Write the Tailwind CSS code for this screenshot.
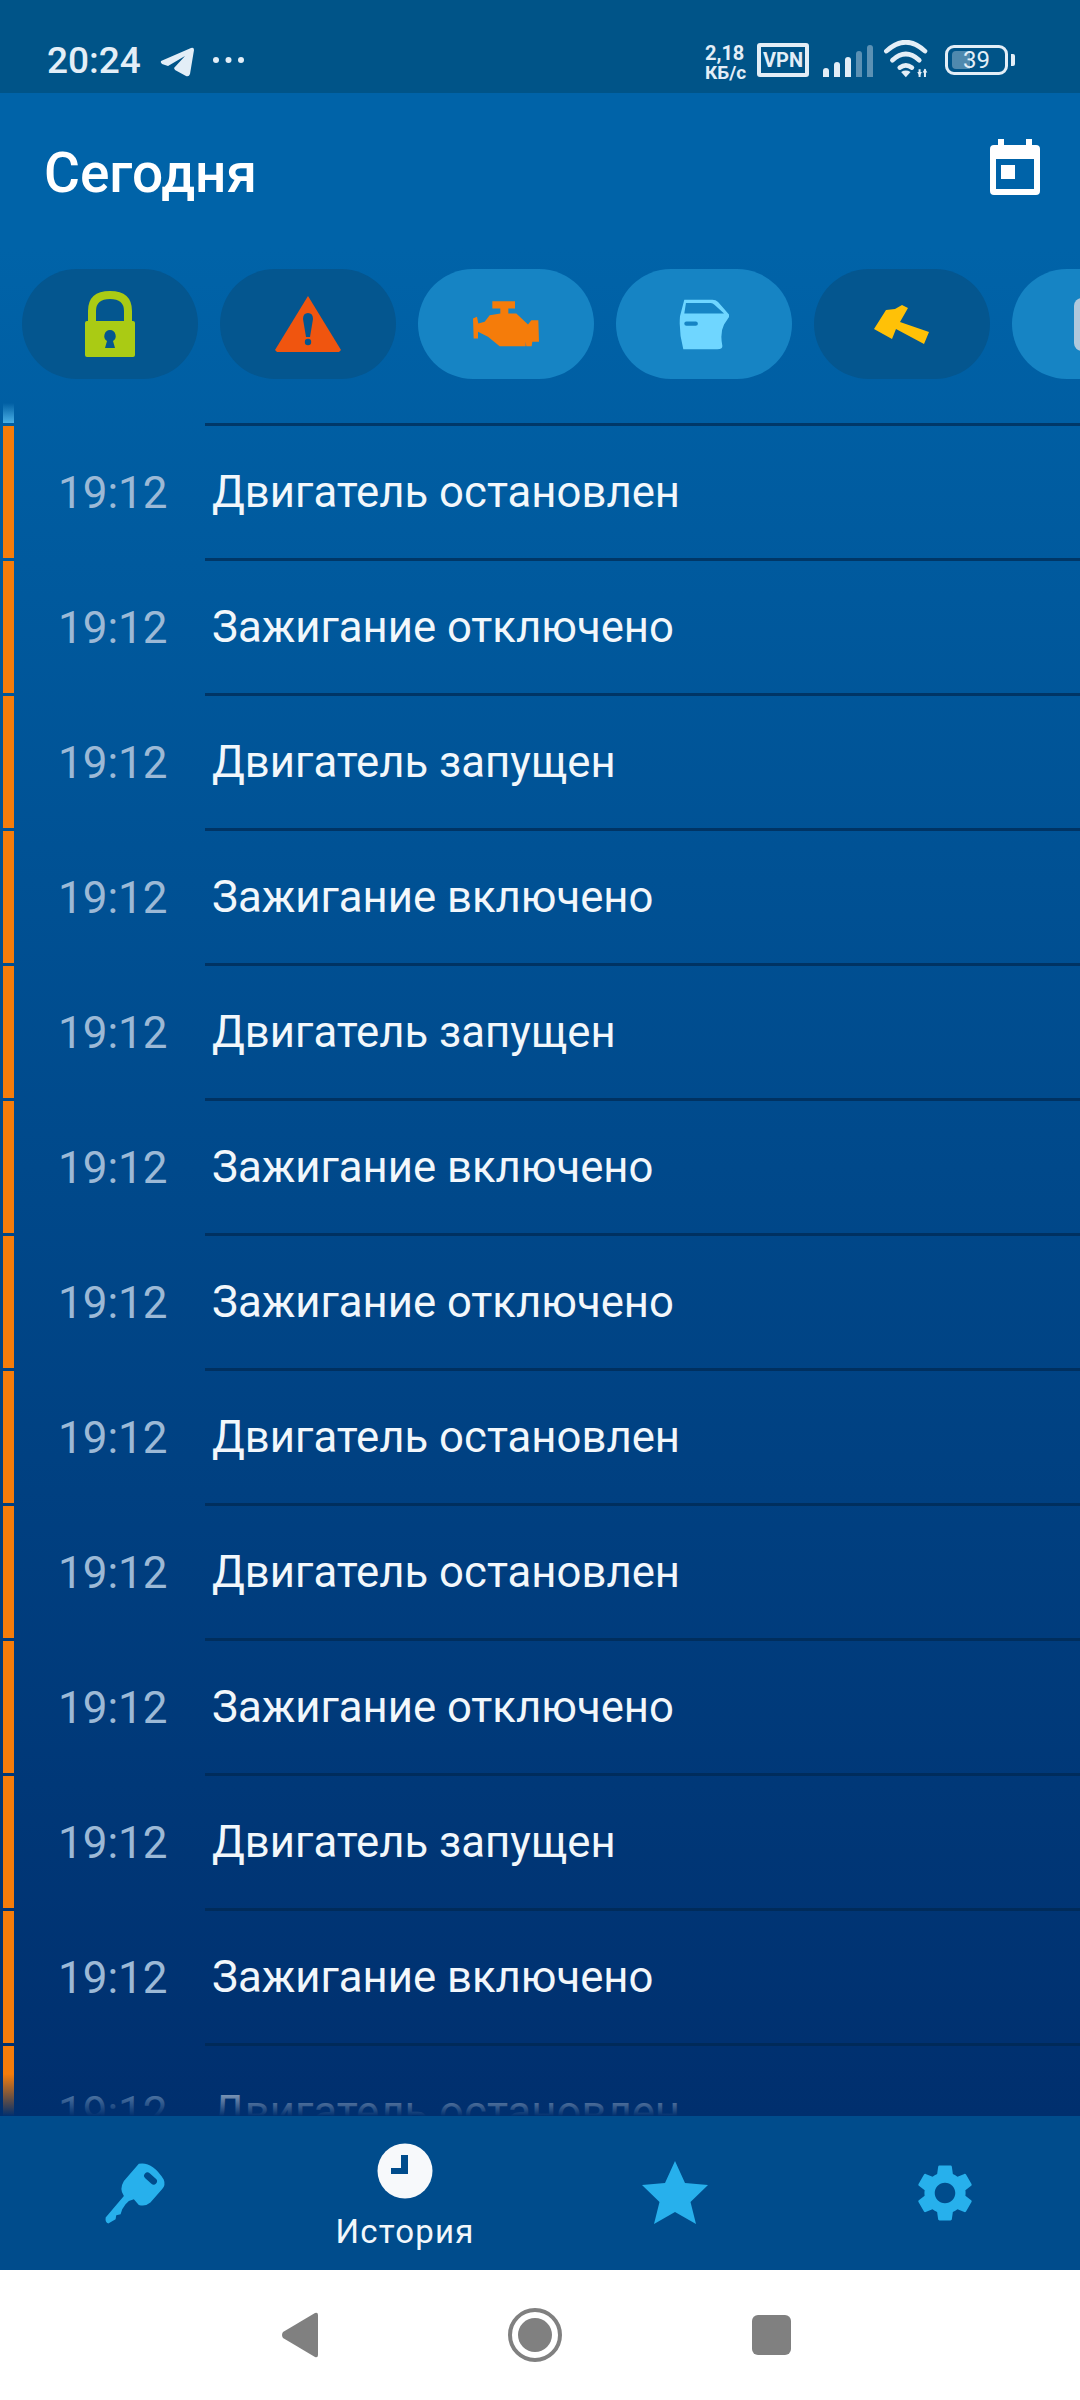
<!DOCTYPE html>
<html lang="ru">
<head>
  <meta charset="UTF-8" />
  <title>История</title>
  <script src="https://cdn.jsdelivr.net/npm/@tailwindcss/browser@4"></script>
</head>
<body class="m-0 bg-white font-['Roboto',sans-serif]">
<div class="w-[1080px] h-[2400px] flex flex-col overflow-hidden">

  <!-- Status bar -->
  <div class="h-[93px] shrink-0 bg-[#005488] text-[#e3eef7] relative">
    <div class="absolute left-[47px] top-[39px] text-[37px] leading-[43px] font-medium">20:24</div>
    <svg class="absolute left-[160px] top-[47px]" width="34" height="30" viewBox="0 0 34 30"><path d="M1 14 31 1Q34 0 34 3L30 27Q29 30 26 29L15 23 14 21 25 9 8 19 2 17Q0 15 1 14Z" fill="#e3eef7"/></svg>
    <svg class="absolute left-[212px] top-[56px]" width="33" height="8" viewBox="0 0 33 8"><circle cx="4" cy="4" r="3" fill="#e3eef7"/><circle cx="16.500" cy="4" r="3" fill="#e3eef7"/><circle cx="29" cy="4" r="3" fill="#e3eef7"/></svg>
    <div class="absolute left-[705px] top-[44px] text-[20px] leading-[19px] font-bold"><div>2,18</div><div class="text-[19px]">КБ/с</div></div>
    <div class="absolute left-[757px] top-[43px] w-[52px] h-[34px] border-[4px] border-[#e3eef7] rounded-[3px] flex items-center justify-center text-[20px] font-bold leading-none">VPN</div>
    <div class="absolute left-[823px] top-[45px] h-[32px] flex items-end gap-[5px]">
      <div class="w-[6px] h-[9px] rounded-t-[3px] bg-[#e3eef7]"></div>
      <div class="w-[6px] h-[15px] rounded-t-[3px] bg-[#e3eef7]"></div>
      <div class="w-[6px] h-[20px] rounded-t-[3px] bg-[#e3eef7]"></div>
      <div class="w-[6px] h-[26px] rounded-t-[3px] bg-[#e3eef7]/40"></div>
      <div class="w-[6px] h-[32px] rounded-t-[3px] bg-[#e3eef7]/40"></div>
    </div>
    <svg class="absolute left-[883px] top-[40px]" width="47" height="38" viewBox="40 15 140 113" fill="none" stroke="#e3eef7" stroke-width="14" stroke-linecap="round"><path d="M50 48Q108-5 165 48"/><path d="M68 75Q108 38 148 75"/><path d="M90 97Q108 84 126 97"/><path d="M108 126 94 110Q108 102 122 110Z" fill="#e3eef7" stroke="none"/><path d="M149 102V125M165 102V125" stroke-width="6" stroke-linecap="butt"/><path d="M142 110H156L149 122ZM158 112H172L165 100Z" fill="#e3eef7" stroke="none"/></svg>
    <div class="absolute left-[945px] top-[45px] w-[63px] h-[30px] border-[3px] border-[#e3eef7] rounded-[9px] overflow-hidden">
      <div class="absolute left-[4px] top-[3px] bottom-[3px] w-[18px] rounded-l-[4px] bg-[#e3eef7]/35"></div>
      <div class="absolute inset-0 flex items-center justify-center text-[24px] leading-none">39</div>
    </div>
    <div class="absolute left-[1011px] top-[54px] w-[4px] h-[12px] rounded-r-[2px] bg-[#e3eef7]"></div>
  </div>

  <!-- Header -->
  <div class="h-[155px] shrink-0 bg-[#0063a8] flex items-center justify-between pl-[44px] pr-[40px] text-white">
    <div class="text-[55px] font-medium leading-none mt-[5px]">Сегодня</div>
    <svg class="mb-[7px]" width="50" height="56" viewBox="0 0 50 56"><path fill-rule="evenodd" fill="#fff" d="M8 0h6v6H36V0h6v6h4q4 0 4 4v42q0 4-4 4H4q-4 0-4-4V10q0-4 4-4h4ZM6 20V50H44V20ZM11 26H25V40H11Z"/><path fill="#fff" d="M11 26H25V40H11Z"/></svg>
  </div>

  <!-- Main area -->
  <div class="flex-1 min-h-0 relative overflow-hidden flex flex-col bg-linear-to-b from-[#0063a8] to-[#002f6e]">

    <!-- Filter chips -->
    <div class="h-[155px] shrink-0 pt-[21px] pl-[22px] flex gap-[22px] overflow-hidden">
      <div class="w-[176px] h-[110px] shrink-0 rounded-[55px] bg-[#04568f] flex items-center justify-center">
        <svg width="50" height="66" viewBox="0 0 50 66"><path d="M7 34V20Q7 4 25 4T43 20V34" fill="none" stroke="#aacb14" stroke-width="8"/><rect y="30" width="50" height="36" rx="2" fill="#aacb14"/><path d="M25 39a6 6 0 0 1 3 11l2 7H20l2-7a6 6 0 0 1 3-11Z" fill="#04568f"/></svg>
      </div>
      <div class="w-[176px] h-[110px] shrink-0 rounded-[55px] bg-[#04568f] flex items-center justify-center">
        <svg width="66" height="56" viewBox="0 0 66 56"><path d="M33 0 66 54 64 56H2L0 54Z" fill="#f0550f"/><path d="M33 17q5 0 5 6l-3 18h-4l-3-18q0-6 5-6Z" fill="#04568f"/><circle cx="33" cy="46" r="3.200" fill="#04568f"/></svg>
      </div>
      <div class="w-[176px] h-[110px] shrink-0 rounded-[55px] bg-[#1684c4] flex items-center justify-center">
        <svg width="66" height="46" viewBox="40 33 198 137"><path d="M98 33H166V55H146V70H170L205 103 215 90H236L238 155H218L216 168H200L198 155V168H120L85 140 55 125V145H42L40 85 52 80 56 100 75 95 90 75 122 70V55H98Z" fill="#f57c0a"/></svg>
      </div>
      <div class="w-[176px] h-[110px] shrink-0 rounded-[55px] bg-[#1684c4] flex items-center justify-center">
        <svg width="51" height="51" viewBox="30 28 152 154"><path d="M45 30H130Q140 30 147 37L180 75V82L165 105Q152 130 160 170 160 180 145 180H42Q28 130 32 80Z" fill="#6fd6ff"/><path d="M50 40H125Q131 40 136 45L165 72H45Z" fill="#1684c4"/><rect x="45" y="96" width="41" height="13" rx="6.500" fill="#1684c4"/></svg>
      </div>
      <div class="w-[176px] h-[110px] shrink-0 rounded-[55px] bg-[#04568f] flex items-center justify-center">
        <svg width="56" height="39" viewBox="0 0 56 39"><path d="M0 24 12 5 21 4 28 0 34 3 26 17 55 27 50 39 22 24 18 34Z" fill="#ffc107"/></svg>
      </div>
      <div class="w-[176px] h-[110px] shrink-0 rounded-[55px] bg-[#1684c4] flex items-center justify-center">
        <div class="w-[53px] h-[53px] rounded-[8px] bg-[#b0c8dc]"></div>
      </div>
    </div>

    <!-- History rows -->
    <div class="flex-1 min-h-0 overflow-hidden">
      <div class="h-[20px] ml-[3px] w-[11px] bg-linear-to-b from-[#3fa9e0]/0 to-[#4ab0e6]"></div>

      <div class="h-[135px] flex"><div class="w-[11px] ml-[3px] mt-[3px] bg-[#f57c0a]"></div><div class="w-[191px] pl-[44px] pt-[5px] flex items-center text-[44px] text-[#9cb9d6]">19:12</div><div class="flex-1 flex items-center pl-[7px] pt-[2px] border-t-[3px] border-[#002850]/70 text-[43.700px] text-[#f2f7fb]">Двигатель остановлен</div></div>
      <div class="h-[135px] flex"><div class="w-[11px] ml-[3px] mt-[3px] bg-[#f57c0a]"></div><div class="w-[191px] pl-[44px] pt-[5px] flex items-center text-[44px] text-[#9cb9d6]">19:12</div><div class="flex-1 flex items-center pl-[7px] pt-[2px] border-t-[3px] border-[#002850]/70 text-[43.700px] text-[#f2f7fb]">Зажигание отключено</div></div>
      <div class="h-[135px] flex"><div class="w-[11px] ml-[3px] mt-[3px] bg-[#f57c0a]"></div><div class="w-[191px] pl-[44px] pt-[5px] flex items-center text-[44px] text-[#9cb9d6]">19:12</div><div class="flex-1 flex items-center pl-[7px] pt-[2px] border-t-[3px] border-[#002850]/70 text-[43.700px] text-[#f2f7fb]">Двигатель запущен</div></div>
      <div class="h-[135px] flex"><div class="w-[11px] ml-[3px] mt-[3px] bg-[#f57c0a]"></div><div class="w-[191px] pl-[44px] pt-[5px] flex items-center text-[44px] text-[#9cb9d6]">19:12</div><div class="flex-1 flex items-center pl-[7px] pt-[2px] border-t-[3px] border-[#002850]/70 text-[43.700px] text-[#f2f7fb]">Зажигание включено</div></div>
      <div class="h-[135px] flex"><div class="w-[11px] ml-[3px] mt-[3px] bg-[#f57c0a]"></div><div class="w-[191px] pl-[44px] pt-[5px] flex items-center text-[44px] text-[#9cb9d6]">19:12</div><div class="flex-1 flex items-center pl-[7px] pt-[2px] border-t-[3px] border-[#002850]/70 text-[43.700px] text-[#f2f7fb]">Двигатель запущен</div></div>
      <div class="h-[135px] flex"><div class="w-[11px] ml-[3px] mt-[3px] bg-[#f57c0a]"></div><div class="w-[191px] pl-[44px] pt-[5px] flex items-center text-[44px] text-[#9cb9d6]">19:12</div><div class="flex-1 flex items-center pl-[7px] pt-[2px] border-t-[3px] border-[#002850]/70 text-[43.700px] text-[#f2f7fb]">Зажигание включено</div></div>
      <div class="h-[135px] flex"><div class="w-[11px] ml-[3px] mt-[3px] bg-[#f57c0a]"></div><div class="w-[191px] pl-[44px] pt-[5px] flex items-center text-[44px] text-[#9cb9d6]">19:12</div><div class="flex-1 flex items-center pl-[7px] pt-[2px] border-t-[3px] border-[#002850]/70 text-[43.700px] text-[#f2f7fb]">Зажигание отключено</div></div>
      <div class="h-[135px] flex"><div class="w-[11px] ml-[3px] mt-[3px] bg-[#f57c0a]"></div><div class="w-[191px] pl-[44px] pt-[5px] flex items-center text-[44px] text-[#9cb9d6]">19:12</div><div class="flex-1 flex items-center pl-[7px] pt-[2px] border-t-[3px] border-[#002850]/70 text-[43.700px] text-[#f2f7fb]">Двигатель остановлен</div></div>
      <div class="h-[135px] flex"><div class="w-[11px] ml-[3px] mt-[3px] bg-[#f57c0a]"></div><div class="w-[191px] pl-[44px] pt-[5px] flex items-center text-[44px] text-[#9cb9d6]">19:12</div><div class="flex-1 flex items-center pl-[7px] pt-[2px] border-t-[3px] border-[#002850]/70 text-[43.700px] text-[#f2f7fb]">Двигатель остановлен</div></div>
      <div class="h-[135px] flex"><div class="w-[11px] ml-[3px] mt-[3px] bg-[#f57c0a]"></div><div class="w-[191px] pl-[44px] pt-[5px] flex items-center text-[44px] text-[#9cb9d6]">19:12</div><div class="flex-1 flex items-center pl-[7px] pt-[2px] border-t-[3px] border-[#002850]/70 text-[43.700px] text-[#f2f7fb]">Зажигание отключено</div></div>
      <div class="h-[135px] flex"><div class="w-[11px] ml-[3px] mt-[3px] bg-[#f57c0a]"></div><div class="w-[191px] pl-[44px] pt-[5px] flex items-center text-[44px] text-[#9cb9d6]">19:12</div><div class="flex-1 flex items-center pl-[7px] pt-[2px] border-t-[3px] border-[#002850]/70 text-[43.700px] text-[#f2f7fb]">Двигатель запущен</div></div>
      <div class="h-[135px] flex"><div class="w-[11px] ml-[3px] mt-[3px] bg-[#f57c0a]"></div><div class="w-[191px] pl-[44px] pt-[5px] flex items-center text-[44px] text-[#9cb9d6]">19:12</div><div class="flex-1 flex items-center pl-[7px] pt-[2px] border-t-[3px] border-[#002850]/70 text-[43.700px] text-[#f2f7fb]">Зажигание включено</div></div>
      <div class="h-[135px] flex"><div class="w-[11px] ml-[3px] mt-[3px] bg-[#f57c0a]"></div><div class="w-[191px] pl-[44px] pt-[5px] flex items-center text-[44px] text-[#9cb9d6]">19:12</div><div class="flex-1 flex items-center pl-[7px] pt-[2px] border-t-[3px] border-[#002850]/70 text-[43.700px] text-[#f2f7fb]">Двигатель остановлен</div></div>
    </div>

    <!-- Fade over the last row -->
    <div class="absolute left-0 right-0 bottom-0 h-[42px] bg-linear-to-b from-[#002f6e]/0 to-[#002f6e]"></div>
  </div>

  <!-- Bottom tabs -->
  <div class="h-[154px] shrink-0 bg-[#004c8c] grid grid-cols-4">
    <div class="flex items-center justify-center">
      <svg width="63" height="64" viewBox="25 20 190 192"><path d="M130 28Q170 20 205 75 212 92 200 105L165 145Q150 158 130 152L115 135 100 140 90 150 80 165 75 180 62 183 60 195 38 208Q28 205 30 190L85 125Q70 105 85 80Z" fill="#27b0ec"/><rect x="143" y="62" width="45" height="20" rx="10" transform="rotate(42 165 72)" fill="#004c8c"/></svg>
    </div>
    <div class="flex flex-col items-center pt-[27px]">
      <svg width="56" height="56" viewBox="0 0 56 56"><circle cx="28" cy="28" r="27.500" fill="#f7f9fb"/><path d="M24 12H31V31H14V25H24Z" fill="#004c8c"/></svg>
      <div class="text-[33px] leading-[38px] tracking-[1.2px] text-[#f2f7fb] mt-[14px]">История</div>
    </div>
    <div class="flex items-center justify-center pb-[2px]">
      <svg width="66" height="63" viewBox="0 0 66 63"><path d="M33 0 43 22 66 24 48.500 41 54 63 33 51 12 63 17.500 41 0 24 23 22Z" fill="#27b0ec"/></svg>
    </div>
    <div class="flex items-center justify-center">
      <svg width="56" height="58" viewBox="2.200 2 19.600 20"><path fill-rule="evenodd" fill="#27b0ec" d="M19.140 12.940c.04-.3.060-.61.060-.94 0-.32-.02-.64-.07-.94l2.030-1.580c.18-.14.230-.41.120-.61l-1.920-3.320c-.12-.22-.37-.29-.59-.22l-2.390.96c-.5-.38-1.030-.7-1.620-.94l-.36-2.540c-.04-.24-.24-.41-.48-.41h-3.840c-.24 0-.43.170-.47.41l-.36 2.540c-.59.240-1.130.570-1.620.94l-2.390-.96c-.22-.08-.47 0-.59.220L2.740 8.870c-.12.210-.08.470.12.610l2.030 1.580c-.05.300-.09.630-.09.940s.02.640.07.940l-2.030 1.580c-.18.140-.23.410-.12.610l1.920 3.320c.12.220.37.290.59.220l2.390-.96c.5.380 1.030.7 1.620.94l.36 2.540c.05.240.24.410.48.410h3.840c.24 0 .44-.17.47-.41l.36-2.540c.59-.24 1.130-.56 1.620-.94l2.390.96c.22.080.47 0 .59-.22l1.920-3.320c.12-.22.070-.47-.12-.61l-2.010-1.580zM12 15.600c-1.980 0-3.600-1.620-3.600-3.600s1.620-3.600 3.600-3.600 3.600 1.620 3.600 3.600-1.620 3.600-3.600 3.600z"/></svg>
    </div>
  </div>

  <!-- System navigation -->
  <div class="h-[130px] shrink-0 bg-white flex items-center pl-[282px] gap-[190px]">
    <svg width="36" height="46" viewBox="0 0 36 46"><path d="M1 20 33 1Q36 0 36 3V43Q36 46 33 45L1 26Q-1 23 1 20Z" fill="#808080"/></svg>
    <svg width="54" height="54" viewBox="0 0 54 54"><circle cx="27" cy="27" r="25" fill="none" stroke="#808080" stroke-width="4"/><circle cx="27" cy="27" r="17" fill="#808080"/></svg>
    <div class="w-[39px] h-[40px] rounded-[6px] bg-[#808080]"></div>
  </div>
</div>
</body>
</html>
